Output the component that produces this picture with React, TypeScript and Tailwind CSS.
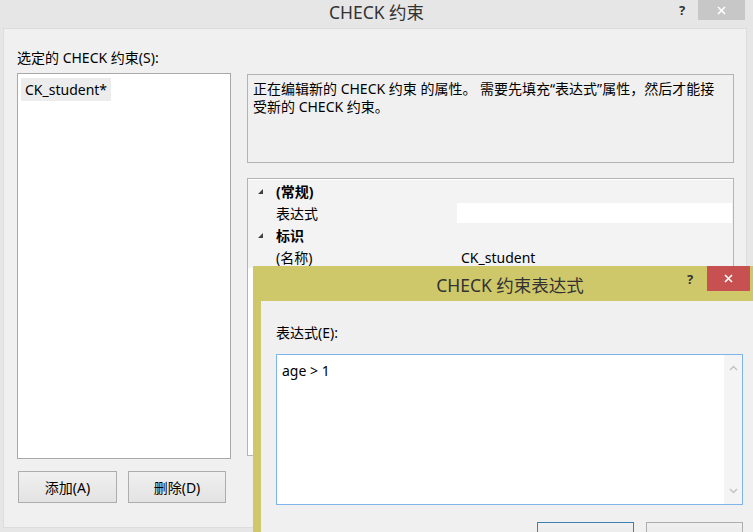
const font = "font-['Noto_Sans','Noto_Sans_CJK_SC',sans-serif]";

const Btn = ({ label, w, primary = false }: { label?: string; w: string; primary?: boolean }) => {
  return (
    <div
      className={`${w} h-[32px] flex items-center justify-center text-[14px] text-black border bg-gradient-to-b from-[#f0f0f0] to-[#e3e3e3] ${
        primary ? "border-[#3c7fb1]" : "border-[#adadad]"
      }`}
    >
      {label}
    </div>
  );
};

const Tri = () => (
  <svg width="7" height="7" viewBox="0 0 7 7" className="shrink-0">
    <polygon points="6,1 6,6 1,6" fill="#404040" />
  </svg>
);

const CatRow = ({ text }: { text: string }) => (
  <div className="h-[22px] flex items-center bg-[#f3f3f3]">
    <div className="w-[28px] flex justify-center pr-[4px]">
      <Tri />
    </div>
    <span className="font-bold text-[14px]">{text}</span>
  </div>
);

const PropRow = ({ name, value, white = false }: { name: string; value: string; white?: boolean }) => (
  <div className="h-[22px] flex items-stretch bg-[#f3f3f3]">
    <div className="w-[28px]" />
    <div className="w-[181px] flex items-center text-[14px]">{name}</div>
    <div className={`flex-1 flex items-center pl-[4px] text-[14px] my-[1px] mr-[1px] ${white ? "bg-white" : ""}`}>{value}</div>
  </div>
);

export default function App() {
  return (
    <div className={`${font} relative w-[753px] h-[532px] overflow-hidden bg-[#e6e6e6] text-black`}>
      {/* outer title bar */}
      <div className="h-[28px] flex items-start relative">
        <div className="flex-1 text-center text-[17.5px] leading-[24px] text-[#333]">CHECK 约束</div>
        <div className="absolute left-[679px] top-[1px] text-[13px] font-bold text-[#333]">?</div>
        <div className="absolute left-[698px] top-0 w-[47px] h-[20px] bg-[#c7c7c7] flex items-center justify-center">
          <svg width="9" height="9" viewBox="0 0 9 9">
            <path d="M1 1 L8 8 M8 1 L1 8" stroke="white" strokeWidth="1.6" />
          </svg>
        </div>
      </div>

      {/* outer body */}
      <div className="ml-[3px] w-[744px] h-[500px] bg-[#f0f0f0] border border-[#dcdcdc] flex">
        <div className="w-[243px] pl-[13px] pt-[18px] flex flex-col">
          <div className="text-[14px] h-[26px]">选定的 CHECK 约束(S):</div>
          <div className="w-[214px] h-[386px] bg-white border border-[#a9a9a9] p-[3px]">
            <div className="inline-block bg-[#ececec] px-[4px] py-[1px] text-[14px]">CK_student*</div>
          </div>
          <div className="flex gap-[11px] mt-[12px] ml-[1px]">
            <Btn label="添加(A)" w="w-[99px]" />
            <Btn label="删除(D)" w="w-[98px]" />
          </div>
        </div>
        <div className="pt-[45px] flex flex-col">
          <div className="w-[487px] h-[89px] border border-[#b4b4b4] bg-[#f0f0f0] px-[5px] pt-[5px] text-[14px] leading-[18px]">
            <div>正在编辑新的 CHECK 约束 的属性。 需要先填充“表达式”属性，然后才能接</div>
            <div>受新的 CHECK 约束。</div>
          </div>
          <div className="w-[487px] h-[278px] mt-[15px] border border-[#b4b4b4] bg-white pt-[1px]">
            <CatRow text="(常规)" />
            <PropRow name="表达式" value="" white />
            <CatRow text="标识" />
            <PropRow name="(名称)" value="CK_student" />
          </div>
        </div>
      </div>

      {/* inner dialog */}
      <div className="absolute left-[253px] top-[266px] w-[514px] h-[300px] bg-[#cfc86a] flex flex-col">
        <div className="h-[35px] relative shrink-0">
          <div className="text-center text-[17.5px] leading-[24px] text-[#333] pt-[7px]">CHECK 约束表达式</div>
          <div className="absolute left-[434px] top-[4px] text-[13px] font-bold text-[#333]">?</div>
          <div className="absolute left-[454px] top-0 w-[43px] h-[25px] bg-[#c75050] flex items-center justify-center">
            <svg width="9" height="9" viewBox="0 0 9 9">
              <path d="M1 1 L8 8 M8 1 L1 8" stroke="white" strokeWidth="1.6" />
            </svg>
          </div>
        </div>
        <div className="flex-1 ml-[8px] bg-[#f0f0f0] pl-[15px] pt-[21px]">
          <div className="text-[14px] h-[32px]">表达式(E):</div>
          <div className="w-[467px] h-[151px] bg-white border border-[#7eb4ea] flex">
            <div className="flex-1 pl-[5px] pt-[5px] text-[14px]">age &gt; 1</div>
            <div className="w-[18px] bg-[#f4f4f4] flex flex-col items-center justify-between py-[10px]">
              <svg width="9" height="6" viewBox="0 0 9 6">
                <path d="M1 5 L4.5 1.5 L8 5" stroke="#c2c2c2" strokeWidth="1.4" fill="none" />
              </svg>
              <svg width="9" height="6" viewBox="0 0 9 6">
                <path d="M1 1 L4.5 4.5 L8 1" stroke="#c2c2c2" strokeWidth="1.4" fill="none" />
              </svg>
            </div>
          </div>
          <div className="flex gap-[12px] mt-[17px] ml-[261px]">
            <Btn w="w-[97px]" primary />
            <Btn w="w-[97px]" />
          </div>
        </div>
      </div>
    </div>
  );
}
